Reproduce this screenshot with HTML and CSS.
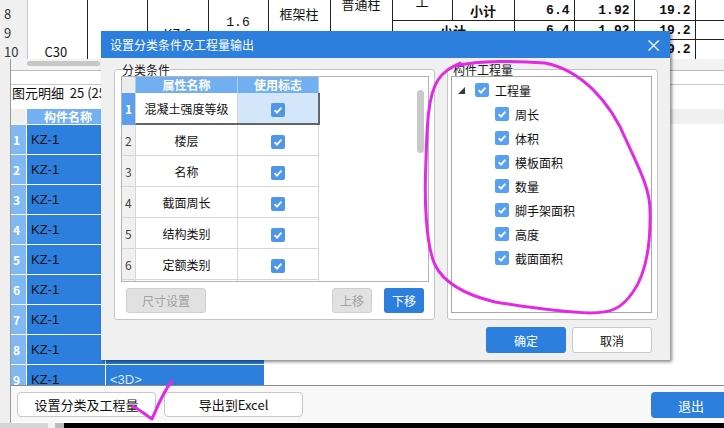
FILE: index.html
```html
<!DOCTYPE html>
<html lang="zh-CN">

<head>
    <meta charset="utf-8">
    <meta name="viewport" content="width=device-width, initial-scale=1">
    <title>设置分类条件及工程量输出</title>
    <link rel="stylesheet" href="styles.css">
</head>

<body>

    <!-- Report sheet behind the dialog -->
    <table class="sheet">
        <colgroup>
            <col style="width:27px"><col style="width:60px"><col style="width:60px"><col style="width:61px">
            <col style="width:60px"><col style="width:62px"><col style="width:62px"><col style="width:60px">
            <col style="width:62px"><col style="width:60px"><col style="width:60px"><col style="width:61px">
            <col style="width:29px">
        </colgroup>
        <tr class="r1">
            <td class="rn">8</td>
            <td rowspan="3" class="c30">C30</td>
            <td rowspan="3"></td>
            <td rowspan="3" class="kz">KZ-6</td>
            <td rowspan="3" class="len">1.6</td>
            <td rowspan="3" class="type">框架柱</td>
            <td rowspan="3" class="cut"><span>普通柱</span></td>
            <td class="line cut gong"><span>工</span></td>
            <td class="sub line">小计</td>
            <td class="n line">6.4</td>
            <td class="n line">1.92</td>
            <td class="n line">19.2</td>
            <td class="end line"></td>
        </tr>
        <tr class="r2">
            <td class="rn">9</td>
            <td colspan="2" class="sub line">小计</td>
            <td class="n line">6.4</td>
            <td class="n line">1.92</td>
            <td class="n line">19.2</td>
            <td class="end line"></td>
        </tr>
        <tr class="r3">
            <td class="rn">10</td>
            <td colspan="2"></td>
            <td class="n"></td>
            <td class="n"></td>
            <td class="n">19.2</td>
            <td class="end"></td>
        </tr>
    </table>

    <div class="main">
        <div class="panel">
            <div class="hscroll"><div class="hthumb"></div></div>
            <div class="blank"></div>
            <div class="info">图元明细&nbsp;&nbsp;25 (25)</div>

            <!-- Element detail list -->
            <div class="detail">
                <div class="d-rn head"></div><div class="d-name head">构件名称</div><div class="d-name head">显示名称</div><div class="d-rest head"></div>
                <div class="d-rn">1</div><div class="d-name">KZ-1</div><div class="d-name"></div><div class="d-rest"></div>
                <div class="d-rn">2</div><div class="d-name">KZ-1</div><div class="d-name"></div><div class="d-rest"></div>
                <div class="d-rn">3</div><div class="d-name">KZ-1</div><div class="d-name"></div><div class="d-rest"></div>
                <div class="d-rn">4</div><div class="d-name">KZ-1</div><div class="d-name"></div><div class="d-rest"></div>
                <div class="d-rn">5</div><div class="d-name">KZ-1</div><div class="d-name"></div><div class="d-rest"></div>
                <div class="d-rn">6</div><div class="d-name">KZ-1</div><div class="d-name"></div><div class="d-rest"></div>
                <div class="d-rn">7</div><div class="d-name">KZ-1</div><div class="d-name"></div><div class="d-rest"></div>
                <div class="d-rn">8</div><div class="d-name">KZ-1</div><div class="d-name"></div><div class="d-rest"></div>
                <div class="d-rn">9</div><div class="d-name">KZ-1</div><div class="d-name dim">&lt;3D&gt;</div><div class="d-rest"></div>
            </div>

            <div class="bottom-bar">
                <button class="out-btn">设置分类及工程量</button>
                <button class="out-btn">导出到Excel</button>
                <button class="exit-btn">退出</button>
            </div>
        </div>
    </div>

    <div class="taskbar"></div>

    <!-- Dialog -->
    <div class="dialog">
        <div class="titlebar">
            <span>设置分类条件及工程量输出</span>
            <span class="close">×</span>
        </div>

        <div class="dlg-body">
            <div class="groups">

                <fieldset class="group left-group">
                    <legend>分类条件</legend>
                    <div class="grid-box">
                        <table class="attr">
                            <tr>
                                <th class="rn"></th>
                                <th class="name">属性名称</th>
                                <th class="use">使用标志</th>
                            </tr>
                            <tr class="sel">
                                <td class="rn">1</td>
                                <td>混凝土强度等级</td>
                                <td class="on"><span class="cb"><svg viewBox="0 0 14 14"><path d="M3.6 7.2 L6 9.6 L10.4 4.6"/></svg></span></td>
                            </tr>
                            <tr>
                                <td class="rn">2</td>
                                <td>楼层</td>
                                <td><span class="cb"><svg viewBox="0 0 14 14"><path d="M3.6 7.2 L6 9.6 L10.4 4.6"/></svg></span></td>
                            </tr>
                            <tr>
                                <td class="rn">3</td>
                                <td>名称</td>
                                <td><span class="cb"><svg viewBox="0 0 14 14"><path d="M3.6 7.2 L6 9.6 L10.4 4.6"/></svg></span></td>
                            </tr>
                            <tr>
                                <td class="rn">4</td>
                                <td>截面周长</td>
                                <td><span class="cb"><svg viewBox="0 0 14 14"><path d="M3.6 7.2 L6 9.6 L10.4 4.6"/></svg></span></td>
                            </tr>
                            <tr>
                                <td class="rn">5</td>
                                <td>结构类别</td>
                                <td><span class="cb"><svg viewBox="0 0 14 14"><path d="M3.6 7.2 L6 9.6 L10.4 4.6"/></svg></span></td>
                            </tr>
                            <tr>
                                <td class="rn">6</td>
                                <td>定额类别</td>
                                <td><span class="cb"><svg viewBox="0 0 14 14"><path d="M3.6 7.2 L6 9.6 L10.4 4.6"/></svg></span></td>
                            </tr>
                            <tr>
                                <td class="rn">7</td>
                                <td>材质</td>
                                <td><span class="cb"><svg viewBox="0 0 14 14"><path d="M3.6 7.2 L6 9.6 L10.4 4.6"/></svg></span></td>
                            </tr>
                        </table>
                        <div class="vthumb"></div>
                    </div>
                    <div class="group-btns">
                        <button class="btn off wide">尺寸设置</button>
                        <button class="btn off push">上移</button>
                        <button class="btn blue">下移</button>
                    </div>
                </fieldset>

                <fieldset class="group right-group">
                    <legend>构件工程量</legend>
                    <div class="tree">
                        <div class="node root">
                            <svg class="arrow" viewBox="0 0 7 7"><polygon points="7,0 7,7 0,7"/></svg>
                            <span class="cb"><svg viewBox="0 0 14 14"><path d="M3.6 7.2 L6 9.6 L10.4 4.6"/></svg></span>
                            <span class="label">工程量</span>
                        </div>
                        <div class="node"><span class="cb"><svg viewBox="0 0 14 14"><path d="M3.6 7.2 L6 9.6 L10.4 4.6"/></svg></span><span class="label">周长</span></div>
                        <div class="node"><span class="cb"><svg viewBox="0 0 14 14"><path d="M3.6 7.2 L6 9.6 L10.4 4.6"/></svg></span><span class="label">体积</span></div>
                        <div class="node"><span class="cb"><svg viewBox="0 0 14 14"><path d="M3.6 7.2 L6 9.6 L10.4 4.6"/></svg></span><span class="label">模板面积</span></div>
                        <div class="node"><span class="cb"><svg viewBox="0 0 14 14"><path d="M3.6 7.2 L6 9.6 L10.4 4.6"/></svg></span><span class="label">数量</span></div>
                        <div class="node"><span class="cb"><svg viewBox="0 0 14 14"><path d="M3.6 7.2 L6 9.6 L10.4 4.6"/></svg></span><span class="label">脚手架面积</span></div>
                        <div class="node"><span class="cb"><svg viewBox="0 0 14 14"><path d="M3.6 7.2 L6 9.6 L10.4 4.6"/></svg></span><span class="label">高度</span></div>
                        <div class="node"><span class="cb"><svg viewBox="0 0 14 14"><path d="M3.6 7.2 L6 9.6 L10.4 4.6"/></svg></span><span class="label">截面面积</span></div>
                    </div>
                </fieldset>

            </div>

            <div class="dlg-btns">
                <button class="btn blue big">确定</button>
                <button class="btn white big">取消</button>
            </div>
        </div>
    </div>

    <!-- Hand-drawn marks on the screenshot -->
    <svg class="ink" viewBox="0 0 724 428">
        <path d="M455 66 C480 60 520 61 545 63 C580 70 610 100 627 142 C640 170 650 190 650 210 C651 250 645 275 633 292 C622 308 612 313 590 313 C560 312 520 306 495 302 C470 296 445 285 435 265 C426 245 424 200 426 160 C427 125 428 95 438 80 C443 72 450 68 460 63"/>
        <path d="M133 406 C140 410 147 416 152 419 C158 405 163 392 172 381"/>
    </svg>

</body>

</html>
```

FILE: styles.css
```css
body {
    margin: 0;
    width: 724px;
    height: 428px;
    overflow: hidden;
    position: relative;
    background-color: #fff;
    font-family: "Noto Sans CJK SC", "Liberation Sans", sans-serif;
    font-size: 12px;
    color: #111;
}

button {
    font-family: inherit;
    font-size: 12px;
    padding: 0;
    border: none;
    cursor: pointer;
}

/* Report sheet at the top */
.sheet {
    border-collapse: collapse;
    table-layout: fixed;
    width: 724px;
    height: 57px;
    font-size: 13px;
}

.sheet td {
    padding: 0;
    border-right: 1px solid #222;
    text-align: center;
    vertical-align: top;
    line-height: 15px;
}

.sheet .r1 td { height: 20px; }
.sheet .r2 td { height: 18px; }
.sheet .r3 td { height: 19px; }

.sheet .rn {
    background-color: #f0f0f0;
    border-right: 1px solid #c8c8c8;
    text-align: left;
    padding-left: 4px;
    color: #333;
    vertical-align: bottom;
}

.sheet .c30 {
    vertical-align: bottom;
    text-align: left;
    padding-left: 17px;
}

.sheet .kz { padding-top: 26px; }
.sheet .len { padding-top: 15px; font-family: "Liberation Mono", monospace; }
.sheet .type { padding-top: 6px; }

.sheet .line { border-bottom: 1px solid #222; vertical-align: middle; }
.sheet .sub { font-weight: bold; vertical-align: middle; }

.sheet td.cut { vertical-align: top; }

.sheet .cut span {
    display: block;
    margin-top: -4px;
}

.sheet .gong span {
    margin-top: -7px;
}

.sheet .n {
    text-align: right;
    padding-right: 4px;
    font-family: "Liberation Mono", monospace;
    font-weight: bold;
    vertical-align: middle;
}

.sheet .end { border-right: none; }

/* Main list area */
.main {
    background-color: #efefef;
    padding-left: 10px;
    height: 364px;
}

.panel {
    border-left: 1px solid #9a9a9a;
    background-color: #fff;
    height: 364px;
    display: flex;
    flex-direction: column;
}

.hscroll {
    height: 11px;
    background-color: #f3f3f3;
    border-bottom: 1px solid #bdbdbd;
}

.hthumb {
    width: 73px;
    height: 5px;
    margin: 2px 0 0 16px;
    border-radius: 3px;
    background-color: #c8c8c8;
}

.blank {
    height: 13px;
    border-bottom: 1px solid #c6c6c6;
}

.info {
    height: 24px;
    line-height: 15px;
    padding-left: 1px;
    font-size: 13px;
}

.detail {
    height: 276px;
    overflow: hidden;
    display: grid;
    grid-template-columns: 15px 78px 158px 1fr;
    grid-template-rows: 15px repeat(9, 29px);
    gap: 1px;
    background-color: #fff;
}

.d-rn {
    background-color: #80b8f2;
    color: #fff;
    font-weight: bold;
    padding-left: 2px;
    line-height: 29px;
}

.d-name {
    background-color: #2c7fdd;
    color: #141414;
    padding-left: 4px;
    line-height: 29px;
    font-family: "Liberation Sans", sans-serif;
    font-size: 13px;
}

.d-name.dim {
    color: #dde9f8;
}

.d-rest {
    background-color: #fff;
}

.detail .head {
    line-height: 15px;
    background-color: #f0f0f0;
}

.detail .d-name.head {
    background-color: #74b1f3;
    color: #fff;
    font-weight: bold;
    text-align: center;
    font-family: "Noto Sans CJK SC", sans-serif;
    font-size: 12px;
}

.bottom-bar {
    border-top: 1px solid #8a8a8a;
    height: 37px;
    background-color: #f8f8f8;
    display: flex;
    align-items: flex-start;
    gap: 8px;
    padding: 6px 0 0 6px;
    box-sizing: border-box;
}

.out-btn {
    width: 139px;
    height: 25px;
    background-color: #fff;
    border: 1px solid #c8c8c8;
    border-radius: 4px;
    font-size: 13px;
    color: #111;
}

.exit-btn {
    margin-left: auto;
    margin-right: -7px;
    width: 80px;
    height: 26px;
    border-radius: 4px;
    background-color: #2c7fdd;
    color: #fff;
    font-size: 13px;
}

.taskbar {
    height: 7px;
    background: linear-gradient(to right, #d6d6d6 0 48px, #f2f2f2 48px 55px, #bcbcbc 55px 64px, #000 64px);
}

/* Dialog window */
.dialog {
    position: absolute;
    left: 101px;
    top: 31px;
    width: 569px;
    height: 329px;
    background-color: #f0f0f0;
    box-shadow: 2px 2px 3px rgba(0, 0, 0, 0.45);
}

.titlebar {
    height: 27px;
    background-color: #2c7fdd;
    color: #fff;
    display: flex;
    align-items: center;
    padding: 0 8px 0 9px;
}

.close {
    margin-left: auto;
    font-size: 17px;
    line-height: 17px;
}

.dlg-body {
    padding: 5px 12px 7px 13px;
}

.groups {
    display: flex;
    gap: 12px;
}

.group {
    margin: 0;
    min-width: 0;
    box-sizing: border-box;
    height: 257px;
    border: 1px solid #c4c4c4;
    border-radius: 3px;
    background-color: #fff;
}

.group legend {
    padding: 0;
    font-size: 12px;
    line-height: 13px;
    color: #1a1a1a;
}

.left-group {
    width: 321px;
    padding: 0 5px 6px 6px;
}

.left-group legend {
    margin-left: 1px;
}

.right-group {
    width: 211px;
    padding: 0 5px 6px 3px;
}

.right-group legend {
    margin-left: 2px;
}

/* Attribute table */
.grid-box {
    height: 206px;
    box-sizing: border-box;
    border: 1px solid #b4b4b4;
    display: flex;
    align-items: flex-start;
    overflow: hidden;
}

.attr {
    border-collapse: collapse;
    table-layout: fixed;
    width: 195px;
}

.attr th {
    height: 16px;
    padding: 0;
    background-color: #72aff0;
    color: #fff;
    font-weight: bold;
    border-right: 1px solid #a8cdf5;
    line-height: 16px;
}

.attr th.rn {
    width: 13px;
    background-color: #ececec;
}

.attr th.name { width: 101px; }
.attr th.use { width: 80px; }

.attr td {
    height: 30px;
    padding: 0;
    text-align: center;
    border-right: 1px solid #d6d6d6;
    border-bottom: 1px solid #d6d6d6;
}

.attr td.rn {
    background-color: #f0f0f0;
    color: #444;
    text-align: left;
    padding-left: 3px;
}

.attr .sel td {
    border-bottom: 2px solid #666;
}

.attr .sel td.rn {
    background-color: #5c9fee;
    color: #fff;
    font-weight: bold;
    border-bottom-color: #5c9fee;
}

.attr .sel td.on {
    background-color: #d4e6fa;
    border-right: 2px solid #666;
}

.cb {
    display: inline-block;
    width: 14px;
    height: 14px;
    border-radius: 2px;
    background-color: #4d96ea;
    vertical-align: middle;
}

.cb svg {
    display: block;
    width: 14px;
    height: 14px;
    fill: none;
    stroke: #fff;
    stroke-width: 1.8;
}

.vthumb {
    margin: 13px 4px 0 auto;
    width: 7px;
    height: 63px;
    border-radius: 4px;
    background-color: #c9c9c9;
}

.group-btns {
    display: flex;
    gap: 12px;
    margin-top: 6px;
    padding: 0 5px;
}

.btn {
    height: 25px;
    width: 40px;
    border-radius: 3px;
}

.btn.wide { width: 80px; }
.btn.push { margin-left: auto; }

.btn.off {
    background-color: #e1e1e1;
    border: 1px solid #cfcfcf;
    color: #a2a2a2;
}

.btn.blue {
    background-color: #2c7fdd;
    color: #fff;
}

.btn.white {
    background-color: #fff;
    border: 1px solid #c8c8c8;
    color: #111;
}

.btn.big {
    height: 26px;
    width: 80px;
}

/* Quantity tree */
.tree {
    height: 237px;
    box-sizing: border-box;
    border: 1px solid #a8a8a8;
    padding-top: 1px;
}

.node {
    display: flex;
    align-items: center;
    height: 24px;
    padding-left: 43px;
}

.node.root {
    padding-left: 6px;
}

.arrow {
    width: 7px;
    height: 7px;
    fill: #3a3a3a;
    margin-right: 10px;
}

.node .cb {
    background-color: #58a0f0;
}

.label {
    margin-left: 6px;
    color: #111;
}

.dlg-btns {
    display: flex;
    justify-content: flex-end;
    gap: 6px;
    margin-top: 7px;
    padding-right: 6px;
}

/* Magenta pen marks */
.ink {
    position: absolute;
    left: 0;
    top: 0;
    width: 724px;
    height: 428px;
    pointer-events: none;
    fill: none;
    stroke: #e22ae6;
    stroke-width: 3;
    stroke-linecap: round;
    stroke-linejoin: round;
}
```
